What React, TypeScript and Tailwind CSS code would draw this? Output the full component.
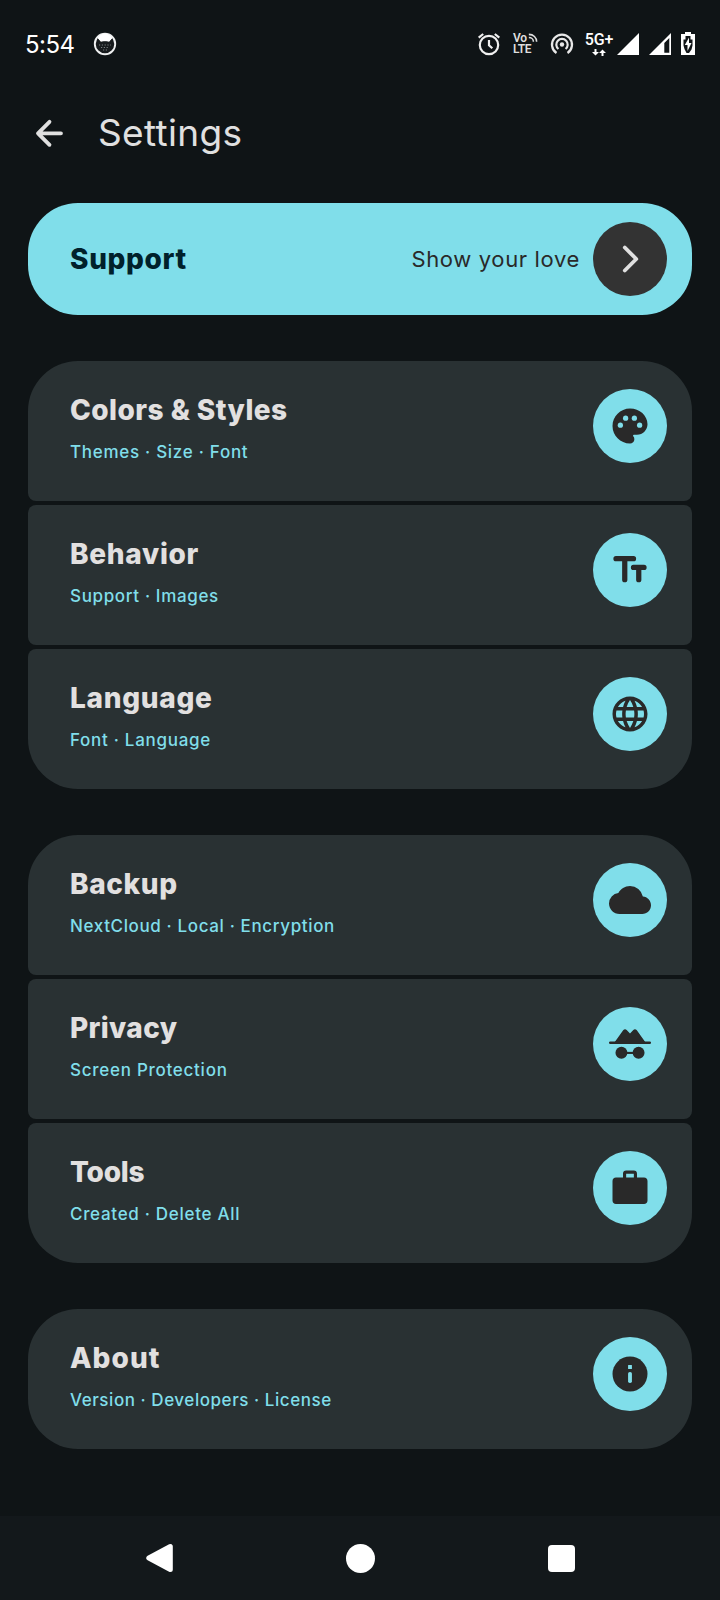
import type { ReactNode } from "react";
import { MdCloud, MdLanguage } from "react-icons/md";

type Item = { title: string; titleClass: string; detail: string; detailClass: string; icon: ReactNode };

const Palette = () => (
  <svg viewBox="0 0 24 24" className="size-[42px]">
    <path fill="currentColor" d="M12 2C6.49 2 2 6.49 2 12s4.49 10 10 10c1.38 0 2.5-1.12 2.5-2.5 0-.61-.23-1.2-.64-1.67-.08-.1-.13-.21-.13-.33 0-.28.22-.5.5-.5H16c3.31 0 6-2.69 6-6 0-4.96-4.49-9-10-9z" />
    <g fill="#80deea">
      <circle cx="6.5" cy="11.5" r="1.5" />
      <circle cx="9.5" cy="7.5" r="1.5" />
      <circle cx="14.5" cy="7.5" r="1.5" />
      <circle cx="17.5" cy="11.5" r="1.5" />
    </g>
  </svg>
);

const TextSize = () => (
  <svg viewBox="0 0 24 24" className="size-[42px]" fill="none" stroke="currentColor" strokeWidth="3" strokeLinecap="round">
    <path d="M4 5.5h10M9 5.5v12M14 10.5h6M17 10.5v7" />
  </svg>
);

const Incognito = () => (
  <svg viewBox="0 0 24 24" className="size-[42px]" fill="currentColor">
    <rect x="0" y="10.5" width="24" height="1.5" rx=".7" />
    <path d="M3.3 10.8 8.1 4.2C8.6 3.5 9.5 3.4 10.1 4L12 6l1.9-2c.6-.6 1.5-.5 2 .2l4.8 6.6z" />
    <circle cx="7.1" cy="17" r="3.4" />
    <circle cx="16.9" cy="17" r="3.4" />
    <rect x="9" y="16.5" width="6" height="1.2" />
  </svg>
);

const Briefcase = () => (
  <svg viewBox="0 0 24 24" className="size-[42px]" fill="currentColor">
    <path fillRule="evenodd" d="M4 6h4V3.8C8 2.7 8.7 2 9.8 2h4.4c1.1 0 1.8.7 1.8 1.8V6h4c1.2 0 2 .8 2 2v11.1c0 1.2-.8 2-2 2H4c-1.2 0-2-.8-2-2V8c0-1.2.8-2 2-2zm5.8-2.2V6h4.4V3.8z" />
  </svg>
);

const Info = () => (
  <svg viewBox="0 0 24 24" className="size-[42px]">
    <circle cx="12" cy="12" r="10" fill="currentColor" />
    <g fill="#80deea">
      <rect x="10.9" y="6.9" width="2.2" height="2.2" rx=".3" />
      <rect x="10.9" y="10.9" width="2.2" height="6.2" rx="1" />
    </g>
  </svg>
);

const groups: Item[][] = [
  [
    { title: "Colors & Styles", titleClass: "tracking-[0.47px]", detail: "Themes · Size · Font", detailClass: "tracking-[0.71px]", icon: <Palette /> },
    { title: "Behavior", titleClass: "tracking-[0.7px]", detail: "Support · Images", detailClass: "tracking-[0.65px]", icon: <TextSize /> },
    { title: "Language", titleClass: "tracking-[0.7px]", detail: "Font · Language", detailClass: "tracking-[0.71px]", icon: <MdLanguage className="size-[42px]" /> },
  ],
  [
    { title: "Backup", titleClass: "tracking-[0.6px]", detail: "NextCloud · Local · Encryption", detailClass: "tracking-[0.63px]", icon: <MdCloud className="size-[42px]" /> },
    { title: "Privacy", titleClass: "tracking-[0.35px]", detail: "Screen Protection", detailClass: "tracking-[0.73px]", icon: <Incognito /> },
    { title: "Tools", titleClass: "tracking-[-0.2px]", detail: "Created · Delete All", detailClass: "tracking-[0.7px]", icon: <Briefcase /> },
  ],
  [{ title: "About", titleClass: "tracking-[1.05px]", detail: "Version · Developers · License", detailClass: "tracking-[0.55px]", icon: <Info /> }],
];

function StatusBar() {
  return (
    <div className="flex h-[88px] items-center pr-[25px] pl-[25px] text-white">
      <span className="w-[68px] pt-px text-2xl leading-8 tracking-[-0.5px]">5:54</span>
      <svg viewBox="0 0 24 24" className="mb-px size-6">
        <circle cx="12" cy="12" r="10.2" fill="#171b1d" stroke="#eef0f0" strokeWidth="1.9" />
        <path fill="#fff" d="M4.500 6C6.500 3 9.500 1.500 12 1.500S17.500 3 19.500 6l-3.300 4.300c-1-.8-2.400-1.100-4.200-1.100s-3.200.300-4.200 1.100z" />
        <path fill="#171b1d" d="M4.500 6.200 7.800 9.700h8.400l3.300-3.500.7 7.300H3.800z" />
        <path stroke="#868a8b" strokeWidth=".9" fill="none" strokeDasharray="1.200 1.600" d="M6 13h12M8 15.500h8M10 18h5" />
      </svg>
      <div className="ml-auto flex items-center">
        <svg viewBox="0 0 24 24" className="mr-3 size-6" fill="none" stroke="#f0f0f0" strokeWidth="2.200">
          <circle cx="12" cy="13" r="9.200" />
          <path d="M12 8v5.300l3.300 3M1.700 5.700 6.200 2M22.300 5.700 17.800 2" />
        </svg>
        <div className="relative mr-3 flex h-[22px] w-[25px] flex-col font-['Roboto'] text-[12px] leading-[11px] font-semibold text-[#dedede]">
          <span className="tracking-[-0.3px]">Vo</span>
          <span className="tracking-[-0.3px]">LTE</span>
          <svg viewBox="0 0 12 12" className="absolute top-0 left-[14px] size-[11px]" fill="none" stroke="#dedede" strokeWidth="1.700">
            <path d="M2 1.500c5 0 8.500 3.500 8.500 8M2 5c3 0 5 2 5 4.500" />
          </svg>
        </div>
        <svg viewBox="0 0 24 24" className="mr-[11px] size-6" fill="none" stroke="#e8e8e8" strokeWidth="2.200">
          <circle cx="12" cy="12.500" r="2.200" fill="#e8e8e8" stroke="none" />
          <path d="M6.500 21A10 10 0 1 1 17.500 21M8.400 17a5.700 5.700 0 1 1 7.200 0" />
        </svg>
        <div className="mr-1 flex h-[25px] w-7 flex-col items-center font-['Roboto'] text-[16px] leading-[16px] font-medium">
          <span className="tracking-[-0.1px]">5G+</span>
          <svg viewBox="0 0 14 7" className="mt-px h-[7px] w-[14px]" fill="currentColor">
            <path d="M2.500 0h2v3H7L3.500 6.500 0 3h2.500zM9.500 7h2V4H14L10.500.500 7 4h2.500z" />
          </svg>
        </div>
        <svg viewBox="0 0 22 22" className="mr-[10px] mb-px size-[22px]">
          <path fill="currentColor" d="M22 0v22H0z" />
        </svg>
        <svg viewBox="0 0 22 22" className="mr-[10px] mb-px size-[22px]">
          <path fill="currentColor" fillRule="evenodd" d="M22 0v22H0zM20.300 5l-5 5V19.800h5z" />
        </svg>
        <svg viewBox="0 0 14 23" className="mb-px h-[23px] w-[14px]">
          <path fill="currentColor" d="M4 0h6v2h4v21H0V2h4z" />
          <path fill="#101417" d="M4.500 4h5v3.500h2v6l-1 4L8 21H5.500l-2-4-1-3.500v-6h2z" />
          <path fill="currentColor" d="M8 5.500 3.800 13h2.700v6L10.500 11H8z" />
        </svg>
      </div>
    </div>
  );
}

const IconDisc = ({ children }: { children: ReactNode }) => (
  <div className="flex size-[74px] shrink-0 items-center justify-center rounded-full bg-[#80deea] text-[#292929]">{children}</div>
);

export default function App() {
  return (
    <div className="flex h-[1600px] w-[720px] flex-col bg-[#0f1416] font-['Inter',sans-serif]">
      <StatusBar />
      <header className="flex h-[89px] items-center pl-[33px] text-[#e0e0e0]">
        <svg viewBox="0 0 32 32" className="size-8" fill="none" stroke="currentColor" strokeWidth="3.800" strokeLinecap="round" strokeLinejoin="round">
          <path d="M28 16.300H5M16.500 4.800 5 16.300l11.500 11.500" />
        </svg>
        <h1 className="ml-[33px] text-[37px] leading-[48px] tracking-[0.35px]">Settings</h1>
      </header>
      <main className="flex grow flex-col gap-[46px] px-7 pt-[26px]">
        <section className="flex h-28 items-center rounded-[50px] bg-[#80deea] pr-[25px] pl-[42px]">
          <h2 className="text-[28px] leading-9 font-extrabold tracking-[0.65px] text-[#00212b]">Support</h2>
          <span className="mr-[13px] ml-auto text-[22px] leading-8 tracking-[0.64px] text-[#292929]">Show your love</span>
          <div className="flex size-[74px] items-center justify-center rounded-full bg-[#333333] text-[#e0e0e0]">
            <svg viewBox="0 0 32 32" className="size-8" fill="none" stroke="currentColor" strokeWidth="3.800" strokeLinecap="round" strokeLinejoin="round">
              <path d="M10.800 4.500 22.300 16 10.800 27.500" />
            </svg>
          </div>
        </section>
        {groups.map((items) => (
          <section key={items[0].title} className="flex flex-col gap-1 overflow-hidden rounded-[50px]">
            {items.map((item) => (
              <div key={item.title} className="flex h-[140px] items-start justify-between rounded-lg bg-[#293133] pr-[25px] pl-[42px]">
                <div className="pt-[31px]">
                  <h2 className={`text-[28px] leading-9 font-extrabold text-[#e2e0e0] ${item.titleClass}`}>{item.title}</h2>
                  <p className={`mt-3 text-[17px] leading-6 font-medium text-[#80deea] ${item.detailClass}`}>{item.detail}</p>
                </div>
                <div className="pt-7">
                  <IconDisc>{item.icon}</IconDisc>
                </div>
              </div>
            ))}
          </section>
        ))}
      </main>
      <nav className="flex h-[84px] items-center justify-between bg-[#13181b] pr-[145px] pl-[145px] text-white">
        <svg viewBox="0 0 28 30" className="h-[30px] w-7" fill="currentColor" stroke="currentColor" strokeWidth="5" strokeLinejoin="round">
          <path d="M25.300 3.500v23L3.800 15z" />
        </svg>
        <div className="size-[29px] rounded-full bg-current" />
        <div className="size-[27px] rounded-[4px] bg-current" />
      </nav>
    </div>
  );
}
